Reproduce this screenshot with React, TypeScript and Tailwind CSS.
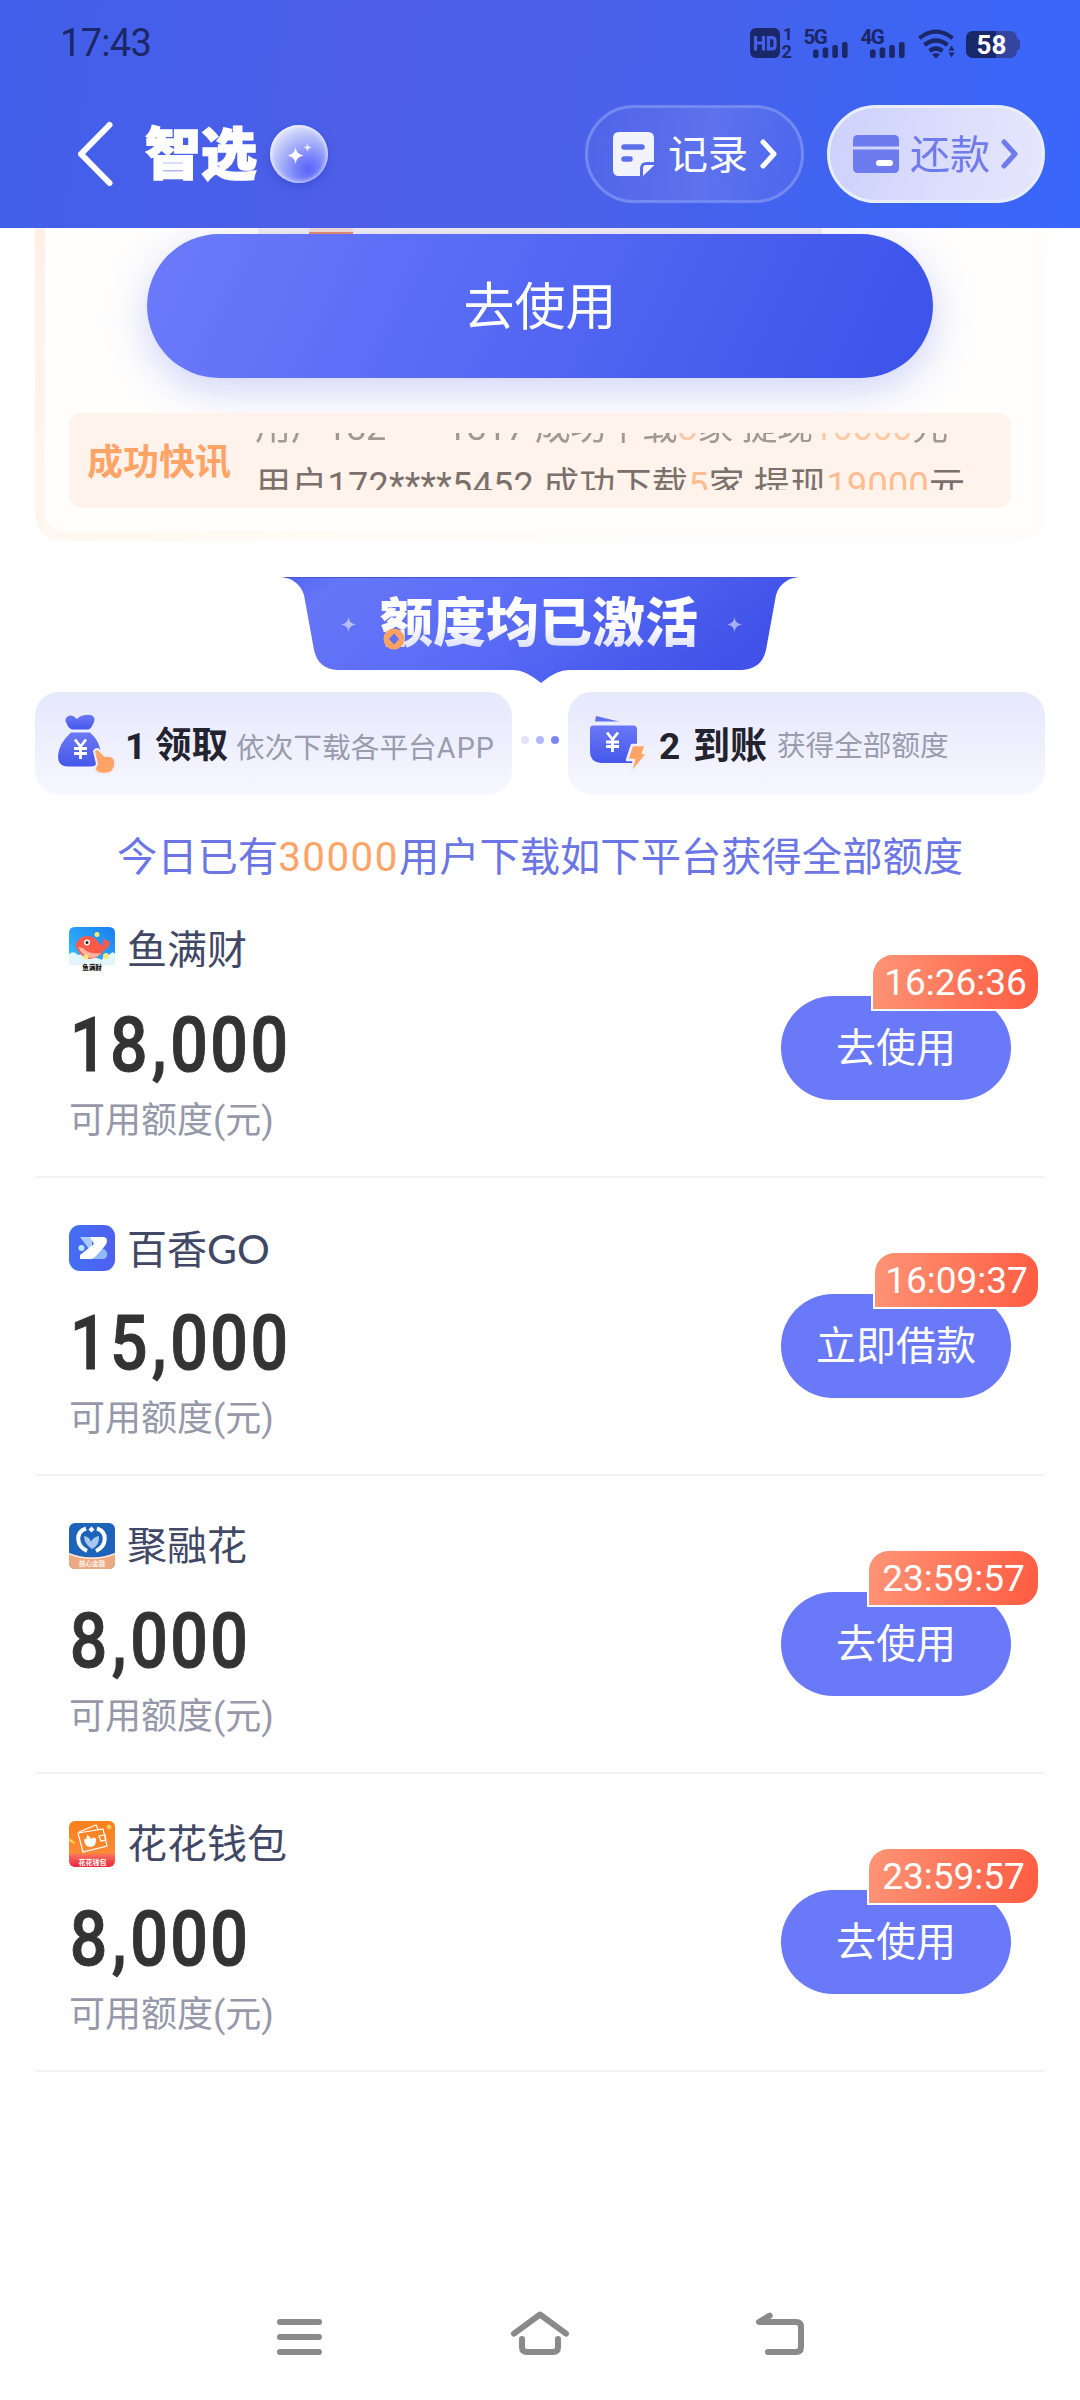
import React from "react";

function StatusIcons() {
  return (
    <svg width="276" height="40" viewBox="748 22 276 40" className="block" fill="#1a2768">
      <rect x="750" y="27" width="30" height="30" rx="6" />
      <g fill="none" stroke="#4560ea" strokeWidth="3.2">
        <path d="M755.5 35v14.500M763.500 35v14.500M755.500 42h8M768.500 36.600h3.500q3 0 3 3v5.300q0 3-3 3h-3.500z" />
      </g>
      <text x="783" y="38.500" fontSize="17" fontWeight="700" fontFamily="Roboto, sans-serif">1</text>
      <text x="781.500" y="57" fontSize="18" fontWeight="700" fontFamily="Roboto, sans-serif">2</text>
      <text x="803.500" y="42.500" fontSize="20.500" fontWeight="700" letterSpacing="-1.500" fontFamily="Roboto, sans-serif">5G</text>
      <text x="860.500" y="42.500" fontSize="20.500" fontWeight="700" letterSpacing="-1.500" fontFamily="Roboto, sans-serif">4G</text>
      {[0, 57].map((dx) => (
        <g key={dx} transform={`translate(${dx} 0)`}>
          <rect x="813" y="48.500" width="5.600" height="8.500" rx="2" />
          <rect x="822.600" y="46.500" width="5.600" height="10.500" rx="2" />
          <rect x="832.300" y="44" width="5.600" height="13" rx="2" />
          <rect x="842" y="41" width="5.600" height="16" rx="2" />
        </g>
      ))}
      <g fill="none" stroke="#1a2768" strokeWidth="4.200">
        <path d="M919.500 37.200q16.500-13 33 0" />
        <path d="M924.500 44q11.500-9 23 0" />
        <path d="M929.500 50q6.500-5 13 0" />
      </g>
      <path d="M932 53.500q4-2.500 8 0l-4 4zM948.500 49.500l3-5 3 5zM948.500 51.500l3 5 3-5z" />
      <rect x="966" y="30" width="51" height="27" rx="7" fill="#33459f" />
      <path d="M973 30h23v27h-23a7 7 0 0 1-7-7v-13a7 7 0 0 1 7-7z" />
      <path d="M1017 38q3 0 3 3v5q0 3-3 3z" fill="#33459f" />
      <text x="991.500" y="53" fill="#fff" fontSize="26" fontWeight="700" textAnchor="middle" fontFamily="Roboto, sans-serif">58</text>
    </svg>
  );
}

function Sparkle({ className }: { className: string }) {
  return (
    <svg viewBox="0 0 16 16" className={className} fill="currentColor">
      <path d="M8 0c.9 4.800 2.200 6.800 8 8-5.800 1.200-7.100 3.200-8 8-.9-4.800-2.200-6.800-8-8 5.800-1.200 7.100-3.200 8-8z" />
    </svg>
  );
}

function Chevron({ className }: { className: string }) {
  return (
    <svg width="18" height="32" viewBox="0 0 18 32" fill="none" stroke="currentColor" strokeWidth="5" strokeLinecap="round" strokeLinejoin="round" className={className}>
      <path d="M3 4l11 12L3 28" />
    </svg>
  );
}

function Header() {
  return (
    <header className="relative z-10 h-[228px] shrink-0 bg-[linear-gradient(100deg,#405fea_0%,#4d5fe8_32%,#4c60e8_52%,#3e64f2_80%,#3967fb_100%)]">
      <div className="flex h-[84px] items-center justify-between pt-px pr-[56px] pl-[60px]">
        <span className="pt-0.5 text-[38px] tracking-[-0.7px] text-[#1a2768]">17:43</span>
        <StatusIcons />
      </div>
      <div className="flex h-[140px] items-center pr-[35px] pl-[75px]">
        <svg width="40" height="68" viewBox="0 0 40 68" fill="none" stroke="#fff" strokeWidth="6" strokeLinecap="round" strokeLinejoin="round">
          <path d="M34.500 5L6 34l28.500 29" />
        </svg>
        <h1 className="ml-[30px] pt-px text-[56px] leading-none font-black text-white [-webkit-text-stroke:1.5px_white]">智选</h1>
        <div className="relative ml-[13px] size-[58px] rounded-full bg-[radial-gradient(circle_at_66%_76%,#5a64fa_0%,#7580fb_20%,#a9b3f8_48%,#dfe3fb_78%,#f0f1fd_100%)] shadow-[0_3px_8px_#3a4fd8,inset_0_0_5px_#ffffff]">
          <Sparkle className="absolute top-[22px] left-[17px] size-[17px] text-white" />
          <Sparkle className="absolute top-[18px] left-[33px] size-[9px] text-white/80" />
        </div>
        <button className="ml-auto flex h-[98px] w-[219px] items-center rounded-full border-[3px] border-[#7389f2] bg-[linear-gradient(100deg,#4f63e8,#5e72ec_55%,#4b66ee)] pl-[25px] text-white">
          <svg width="42" height="46" viewBox="0 0 42 46">
            <path d="M6 1h29q6 0 6 6v24h-7q-7 0-7 7v7H6q-6 0-6-6V7q0-6 6-6z" fill="#f3f3fe" />
            <path d="M11 16h18M11 28h6" stroke="#5d6eeb" strokeWidth="5.500" strokeLinecap="round" />
            <path d="M30 45V37q0-3 3-3h8.500z" fill="#f3f3fe" />
          </svg>
          <span className="ml-[13px] pt-[3px] text-[40px] leading-none">记录</span>
          <Chevron className="ml-[12px]" />
        </button>
        <button className="ml-[23px] flex h-[98px] w-[218px] items-center rounded-full border-[3px] border-[#e9eefd] bg-[linear-gradient(100deg,#ccd1fd,#dddffc_60%,#e6e6fd)] pl-[23px] text-[#6f7aeb]">
          <svg width="46" height="40" viewBox="0 0 46 40">
            <path d="M5 1h36q5 0 5 5v6.500H0V6q0-5 5-5z" fill="#6e7bee" />
            <path d="M0 15.500h46V34q0 5-5 5H5q-5 0-5-5z" fill="#6e7bee" />
            <path d="M26 29h11" stroke="#fff" strokeWidth="6" strokeLinecap="round" />
          </svg>
          <span className="ml-[11px] pt-[3px] text-[40px] leading-none">还款</span>
          <Chevron className="ml-[11px]" />
        </button>
      </div>
    </header>
  );
}

function TickerLine({ phone, count, amount, dim }: { phone: string; count: string; amount: string; dim?: boolean }) {
  return (
    <p className={dim ? "h-[58px] text-[36px] leading-[58px] tracking-[-0.350px] whitespace-pre text-[#857b77] opacity-75" : "h-[58px] text-[36px] leading-[58px] tracking-[0.250px] whitespace-pre text-[#7b706b]"}>
      用户{phone} 成功下载<span className="text-[#fdbd91]">{count}</span>家 提现<span className="text-[#fdbd91]">{amount}</span>元
    </p>
  );
}

function OfferCard() {
  return (
    <section className="relative mx-[35px] h-[313px] shrink-0 rounded-b-[26px] bg-[linear-gradient(150deg,#fff0e6_0%,#fffaf3_45%,#fffdfb_75%)] px-[10px] pb-[10px]">
      <div className="h-full rounded-b-[18px] bg-[#fffefd] px-[24px]">
        <div className="ml-[189px] h-[6px] w-[564px] bg-[#f2edf0]">
          <div className="ml-[51px] h-[6px] w-[44px] border-b-2 border-[#e58a6a] bg-[#f4dcd4]" />
        </div>
        <button className="relative z-0 ml-[78px] flex h-[144px] w-[786px] items-center justify-center rounded-full bg-[linear-gradient(115deg,#6c7bfb_0%,#5468f3_48%,#3c52e9_100%)] text-[51px] leading-none text-white shadow-[0_12px_40px_rgba(84,100,235,0.28)]">
          <span className="pt-0.5">去使用</span>
        </button>
        <div className="relative mt-[35px] flex h-[95px] items-center rounded-[12px] bg-[#fff3ec] pl-[18px]">
          <span className="pt-1 text-[36px] leading-none font-bold text-[#ffa366]">成功快讯</span>
          <div className="mt-[2px] ml-[24px] h-[57px] overflow-hidden">
            <div className="-mt-[34px]">
              <TickerLine phone="182****1817" count="8" amount="10000" dim />
              <TickerLine phone="172****5452" count="5" amount="19000" />
            </div>
          </div>
        </div>
      </div>
    </section>
  );
}

function Banner() {
  return (
    <div className="relative mx-auto mt-[36px] h-[107px] w-[518px] shrink-0">
      <svg width="518" height="107" viewBox="0 0 518 107" className="absolute inset-0">
        <defs>
          <linearGradient id="bn" x1="0" y1="0" x2="1" y2="0.250">
            <stop offset="0" stopColor="#5264f0" />
            <stop offset="0.120" stopColor="#6676f8" />
            <stop offset="0.500" stopColor="#5a6cf7" />
            <stop offset="1" stopColor="#4052e8" />
          </linearGradient>
        </defs>
        <path d="M0 0H518C506 1 498 8 495 18L485 73Q481 92 461 93H288Q275 93 260 106Q245 93 232 93H57Q37 92 33 73L23 18C20 8 12 1 0 0z" fill="url(#bn)" />
        <path d="M4 .5H514" stroke="#4656d0" strokeWidth="1" />
      </svg>
      <Sparkle className="absolute top-[40px] left-[60px] size-[15px] text-[#b6bdfb]" />
      <Sparkle className="absolute top-[40px] left-[446px] size-[15px] text-[#a5aff8]" />
      <h2 className="absolute top-[19px] left-[99px] bg-gradient-to-b from-white from-50% to-[#d9dcfb] bg-clip-text text-[53px] leading-[56px] font-black whitespace-nowrap text-transparent">额度均已激活</h2>
      <svg width="22" height="22" viewBox="0 0 22 22" className="absolute top-[51px] left-[102px]">
        <circle cx="11" cy="11" r="10.500" fill="#fda263" />
        <path d="M11 5.500l5 5.500-5 5.500L6 11z" fill="#5f70f4" />
      </svg>
    </div>
  );
}

function BagIcon() {
  return (
    <svg width="60" height="60" viewBox="0 0 60 60">
      <defs>
        <linearGradient id="bg1" x1="0" y1="0" x2="0" y2="1">
          <stop offset="0" stopColor="#6a78f6" />
          <stop offset="1" stopColor="#4558ea" />
        </linearGradient>
      </defs>
      <path d="M10 3Q13 .500 17 2.500Q19 4 20 5Q22 2 26 1.500Q32 0 36 2Q39 5 36 10Q34 15 31 15.500H15Q11 14 9.500 9Q7 6 10 3z" fill="url(#bg1)" />
      <path d="M14 18.500H33Q44 28 44 42Q43 52 34 52.500H10Q1 52 1 42Q2 29 14 18.500z" fill="url(#bg1)" />
      <path d="M18 25.500l5.500 7 5.500-7M23.500 32v13M17 34.500h13M17 39.500h13" stroke="#fff" strokeWidth="2.800" fill="none" />
      <path d="M37 37q3-4 6 0l5 5q9-1 10 5 1 8-5 12-8 2-13-1-4-3-1-6l1-2z" fill="#ffa366" stroke="#eeeefe" strokeWidth="2" />
    </svg>
  );
}

function WalletIcon() {
  return (
    <svg width="60" height="60" viewBox="0 0 60 60">
      <path d="M7 2l23 5.500H6z" fill="#6372f3" />
      <path d="M4 11.500H44q4 0 4 4V49H12Q1 48 1 38V15q0-3.500 3-3.500z" fill="url(#bg1)" />
      <path d="M18 18.500l5.500 7 5.500-7M23.500 25v13M17 28h13M17 32.500h13" stroke="#fff" strokeWidth="2.800" fill="none" />
      <path d="M43 31h14l-3 8h5L43 58l-1-1 3-11h-7z" fill="#ffa366" stroke="#f1f1fe" strokeWidth="2.500" strokeLinejoin="round" />
    </svg>
  );
}

function Steps() {
  return (
    <div className="mx-[35px] mt-[8px] flex h-[103px] shrink-0 items-start justify-between">
      <div className="flex h-full w-[477px] items-center rounded-[24px] bg-gradient-to-b from-[#e6e8fd] to-[#f7f7fe] pl-[22px]">
        <BagIcon />
        <b className="ml-[8px] w-[30px] pt-[5px] text-[37px] leading-none text-[#22232e]">1</b>
        <b className="pt-[5px] text-[36.500px] leading-none text-[#22232e]">领取</b>
        <span className="ml-[8px] pt-[10px] text-[28.700px] leading-none whitespace-nowrap text-[#9a9bae]">依次下载各平台<span className="tracking-[1.100px]">APP</span></span>
      </div>
      <div className="flex h-[96px] items-center gap-[7px]">
        <i className="size-[8px] rounded-full bg-[#e4e3fc]" />
        <i className="size-[8px] rounded-full bg-[#b1b7f9]" />
        <i className="size-[8px] rounded-full bg-[#7a87f4]" />
      </div>
      <div className="flex h-full w-[477px] items-center rounded-[24px] bg-gradient-to-b from-[#e6e8fd] to-[#f7f7fe] pl-[21px]">
        <WalletIcon />
        <b className="ml-[10px] w-[34px] pt-[5px] text-[37px] leading-none text-[#22232e]">2</b>
        <b className="pt-[5px] text-[37px] leading-none text-[#22232e]">到账</b>
        <span className="ml-[10px] pt-[5px] text-[28.600px] leading-none whitespace-nowrap text-[#9a9bae]">获得全部额度</span>
      </div>
    </div>
  );
}

function FishLogo() {
  return (
    <svg width="46" height="46" viewBox="0 0 46 46">
      <defs>
        <linearGradient id="fl" x1="0" y1="1" x2="1" y2="0">
          <stop offset="0" stopColor="#35c4ff" />
          <stop offset="1" stopColor="#1a7cf0" />
        </linearGradient>
      </defs>
      <path d="M0 38V6q0-6 6-6h34q6 0 6 6v32z" fill="url(#fl)" />
      <path d="M0 27q5-4 9 1 6-2 9 4 9-3 15 1 2-6 7-5 4-5 6-1v11H0z" fill="#e2f6fd" />
      <path d="M8 15q3-6 10-6 8 0 12 7l4 3q-1-6 2-8 1 4 5 3-1 8-6 9-4 8-14 9-9-2-13-10-3-4 0-7z" fill="#fb5a4a" />
      <path d="M9 20q4 9 13 11 7 0 10-5-12 2-18-5z" fill="#ffb39e" />
      <circle cx="18" cy="15.500" r="3" fill="#fff" />
      <circle cx="18" cy="15.500" r="1.500" fill="#222" />
      <circle cx="28" cy="7.500" r="2.500" fill="#f6e96b" />
      <circle cx="37" cy="29" r="3" fill="#f2ea7a" />
      <circle cx="17" cy="30" r="2.500" fill="#f2ea7a" />
      <text x="23" y="43" fontSize="6.500" fontWeight="900" textAnchor="middle" fill="#111">鱼满财</text>
    </svg>
  );
}

function GoLogo() {
  return (
    <svg width="46" height="46" viewBox="0 0 46 46">
      <defs>
        <linearGradient id="gl" x1="0" y1="0" x2="1" y2="0">
          <stop offset="0" stopColor="#436ff4" />
          <stop offset="1" stopColor="#5060f0" />
        </linearGradient>
      </defs>
      <rect width="46" height="46" rx="11" fill="url(#gl)" />
      <path d="M11 12h12v12h-3z" fill="#a9cbfd" />
      <path d="M28 24h7q4 3 3 7-1 3-4 3h-14z" fill="#8fb9fb" />
      <path d="M21 12h13q4 0 4 4 0 3-3 6L26 32q-2 2-5 2H11v-4l14-11z" fill="#fff" />
      <circle cx="12.500" cy="23" r="3" fill="#b9eafd" />
    </svg>
  );
}

function JuLogo() {
  return (
    <svg width="46" height="46" viewBox="0 0 46 46">
      <clipPath id="jc"><rect width="46" height="46" rx="6" /></clipPath>
      <g clipPath="url(#jc)">
        <rect width="46" height="46" fill="#1e63ba" />
        <path d="M0 30q23 9 46 0v16H0z" fill="#ecaa84" />
        <path d="M0 30q23 9 46 0v1.500q-23 9-46 0z" fill="#fbeadf" />
      </g>
      <path d="M17 5.500C6 9 7 23 18 28M28 5.500C39 9 38 23 27 28" fill="none" stroke="#fff" strokeWidth="4" />
      <path d="M22.500 3.500l3 3-3 3-3-3z" fill="#fff" />
      <path d="M15 13q6 1 7 6 2-5 8-6 1 9-7 13-8-5-8-13z" fill="#a8c6ee" />
      <text x="23" y="43" fontSize="6.500" fontWeight="700" textAnchor="middle" fill="#fff4ec">核心金融</text>
    </svg>
  );
}

function WalletLogo() {
  return (
    <svg width="46" height="46" viewBox="0 0 46 46">
      <defs>
        <linearGradient id="wl" x1="0" y1="0" x2="0" y2="1">
          <stop offset="0" stopColor="#f9801c" />
          <stop offset="0.700" stopColor="#fb8b35" />
          <stop offset="0.740" stopColor="#fb6f5b" />
          <stop offset="1" stopColor="#ef233c" />
        </linearGradient>
      </defs>
      <rect width="46" height="46" rx="6" fill="url(#wl)" />
      <g fill="none" stroke="#fff" strokeWidth="1.200">
        <path d="M9 12l25-4 4 17-24 6zM10 11l17-7 2 4M30 15l6-1 1 5-5 1z" />
      </g>
      <path d="M15 18q3 1 3-4 3 1 4 4 3-3 5 0 1 7-6 8-6-1-6-8z" fill="#fff" />
      <circle cx="40" cy="6" r="2.500" fill="#ffc75a" />
      <path d="M0 17l6 4-1 2-5-3z" fill="#ffd257" />
      <text x="23.500" y="43.500" fontSize="7" fontWeight="700" textAnchor="middle" fill="#fff">花花钱包</text>
    </svg>
  );
}

const offers = [
  { logo: <FishLogo />, name: "鱼满财", latin: "", amount: "18,000", action: "去使用", timer: "16:26:36", width: "w-[169px]" },
  { logo: <GoLogo />, name: "百香", latin: "GO", amount: "15,000", action: "立即借款", timer: "16:09:37", width: "w-[167px]" },
  { logo: <JuLogo />, name: "聚融花", latin: "", amount: "8,000", action: "去使用", timer: "23:59:57", width: "w-[173px]" },
  { logo: <WalletLogo />, name: "花花钱包", latin: "", amount: "8,000", action: "去使用", timer: "23:59:57", width: "w-[173px]" },
];

function Amount({ value }: { value: string }) {
  const [thousands, rest] = value.split(",");
  return (
    <div className="mt-[34px] h-[76px] origin-left scale-x-[0.87] pl-px text-[76px] leading-[76px] font-medium tracking-[2.800px] whitespace-nowrap text-[#333333] [-webkit-text-stroke:1px_#333333]">
      {thousands}
      <span className="ml-[2px] tracking-[4.500px]">,</span>
      {rest}
    </div>
  );
}

function OfferRow({ offer }: { offer: (typeof offers)[number] }) {
  return (
    <li className="flex h-[298px] justify-between border-b-2 border-[#f2f2f4] px-[34px]">
      <div className="pt-[47px]">
        <div className="flex h-[46px] items-center">
          {offer.logo}
          <span className="ml-[12px] pt-[2px] text-[40px] leading-none text-[#414866]">
            {offer.name}
            {offer.latin && <span className="font-['Lato'] text-[41px] leading-none">{offer.latin}</span>}
          </span>
        </div>
        <Amount value={offer.amount} />
        <div className="mt-[18px] text-[36px] leading-[40px] text-[#9697a9]">可用额度(元)</div>
      </div>
      <div className="relative mt-[116px] h-[104px] w-[230px]">
        <button className="flex size-full items-center justify-center rounded-full bg-[#6a79f8] pt-px text-[40px] leading-none text-white">{offer.action}</button>
        <span className={`absolute -top-[43px] -right-[29px] flex h-[58px] items-center justify-center rounded-[22px] rounded-bl-none border-2 border-white bg-[linear-gradient(100deg,#ff9577,#ff5b40)] bg-origin-border text-[37px] leading-none text-white ${offer.width}`}>
          {offer.timer}
        </span>
      </div>
    </li>
  );
}

function NavBar() {
  return (
    <nav className="mt-auto flex h-[126px] shrink-0 items-center justify-center gap-[180px]">
      {[
        "M10 22h39M10 37h39M10 52h39",
        "M4 33.700L30 14.500l26 19.200M12 39v8q0 5 5 5h26q5 0 5-5v-8",
        "M19.700 15.700L9 22h37q5 0 5 5v20q0 5-5 5H18",
      ].map((d) => (
        <svg key={d} width="60" height="60" viewBox="0 7 60 60" fill="none" stroke="#8a8a8a" strokeWidth="6" strokeLinecap="round" strokeLinejoin="round">
          <path d={d} />
        </svg>
      ))}
    </nav>
  );
}

export default function App() {
  return (
    <div className="flex h-[2400px] w-[1080px] flex-col overflow-hidden bg-white font-['Roboto','Noto_Sans_CJK_SC',sans-serif]">
      <Header />
      <OfferCard />
      <Banner />
      <Steps />
      <p className="mt-[33px] h-[57px] shrink-0 text-center text-[40.300px] leading-[60px] whitespace-nowrap text-[#6b76e4]">
        今日已有<span className="tracking-[1.500px] text-[#ffa366]">30000</span>用户下载如下平台获得全部额度
      </p>
      <ul className="mx-[35px] -mt-[5px]">
        {offers.map((o) => (
          <OfferRow key={o.name} offer={o} />
        ))}
      </ul>
      <NavBar />
    </div>
  );
}
